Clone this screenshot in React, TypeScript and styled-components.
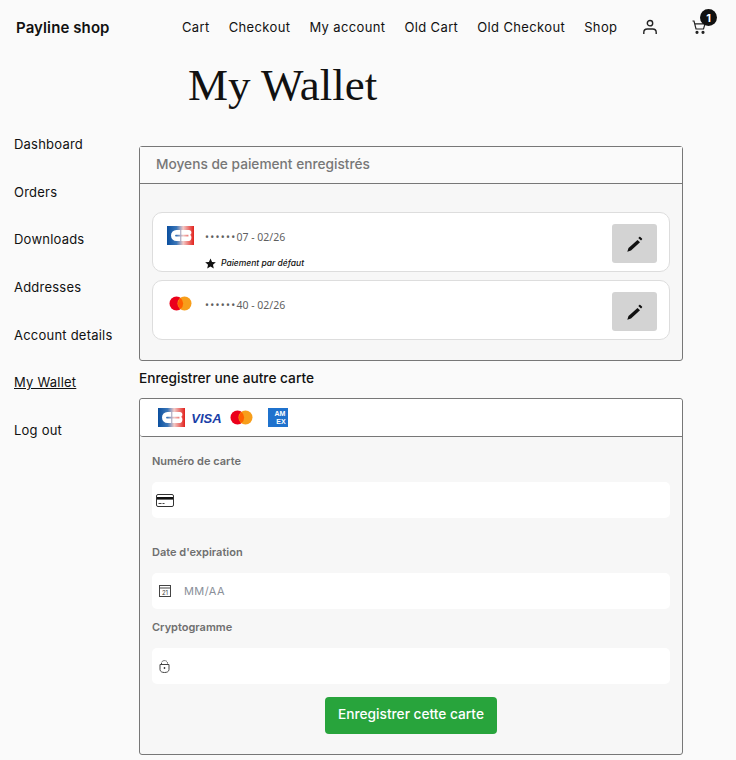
import React from "react";
import styled, { createGlobalStyle } from "styled-components";

const Global = createGlobalStyle`
  html, body { margin: 0; padding: 0; background: #fafafa; }
  body { font-family: Inter, "Noto Sans", sans-serif; color: #111; height: 760px; overflow: hidden; }
  * { box-sizing: border-box; }
`;

const Page = styled.div`width: 736px;`;

const Header = styled.header`
  display: flex;
  align-items: center;
  height: 54px;
  padding: 0 20px 0 16px;
`;
const Brand = styled.div`
  font-size: 15px;
  font-weight: 600;
  letter-spacing: 0.1px;
  width: 166px;
`;
const Nav = styled.nav`
  display: flex;
  align-items: center;
  gap: 19px;
  font-size: 13px;
  letter-spacing: 0.37px;
  white-space: nowrap;
  flex: 1;
`;
const IconSlot = styled.span<{ $ml?: number }>`
  position: relative;
  display: inline-flex;
  margin-left: ${p => p.$ml ?? 0}px;
`;
const Badge = styled.span`
  position: absolute;
  top: -10px;
  right: -10px;
  width: 17px;
  height: 17px;
  border-radius: 50%;
  background: #111;
  color: #fff;
  font-size: 11px;
  font-weight: 700;
  display: flex;
  align-items: center;
  justify-content: center;
`;
const Title = styled.h1`
  margin: 0;
  padding-left: 188px;
  height: 83px;
  font-family: "Liberation Serif", serif;
  font-weight: 400;
  font-size: 45px;
  line-height: 62px;
  color: #111;
`;
const Body = styled.div`
  display: flex;
  align-items: flex-start;
`;
const Side = styled.aside`
  width: 139px;
  padding: 0 0 0 14px;
  display: flex;
  flex-direction: column;
`;
const SideLink = styled.a<{ $active?: boolean }>`
  display: block;
  width: fit-content;
  height: 47.7px;
  font-size: 13px;
  letter-spacing: 0.22px;
  line-height: 14px;
  color: #111;
  text-decoration: ${p => (p.$active ? "underline" : "none")};
`;
const Main = styled.main`
  width: 544px;
  margin-top: 9px;
`;
const Panel = styled.section`
  border: 1px solid #777;
  border-radius: 3px;
  background: #f7f7f7;
`;
const PanelHead = styled.div`
  height: 37px;
  padding: 0 0 2px 16px;
  display: flex;
  align-items: center;
  border-bottom: 1px solid #777;
  font-size: 13.7px;
  font-weight: 500;
  color: #777;
  background: #fafafa;
`;
const CardList = styled.div`
  display: flex;
  flex-direction: column;
  gap: 8px;
  padding: 28px 12px 20px;
`;
const CardRow = styled.div`
  height: 60px;
  background: #fff;
  border: 1px solid #ddd;
  border-radius: 10px;
  display: flex;
  padding: 0 12px 0 14px;
`;
const Logo = styled.div`
  width: 27px;
  margin-top: 13px;
  display: flex;
  justify-content: center;
  height: 19px;
  align-items: center;
`;
const CardInfo = styled.div`
  flex: 1;
  padding: 17px 0 0 11px;
  font-size: 10.5px;
  line-height: 14px;
  color: #5f5f5f;
  font-family: "Noto Sans", Inter, sans-serif;
`;
const Dots = styled.span`
  letter-spacing: 1.3px;
`;
const Default = styled.div`
  display: flex;
  align-items: center;
  gap: 5px;
  margin-top: 13px;
  font-family: Inter, sans-serif;
  font-size: 8.5px;
  font-style: italic;
  font-weight: 500;
  color: #111;
  line-height: 12px;
`;
const EditButton = styled.button`
  align-self: flex-start;
  margin-top: 11px;
  width: 45px;
  height: 39px;
  border: none;
  border-radius: 3px;
  background: #d3d3d3;
  display: flex;
  align-items: center;
  justify-content: center;
  padding: 0;
`;
const SubTitle = styled.h2`
  margin: 9px 0 12px;
  font-size: 13.7px;
  line-height: 16px;
  font-weight: 500;
  color: #111;
`;
const LogoBand = styled.div`
  height: 38px;
  background: #fff;
  border-bottom: 1px solid #777;
  border-radius: 3px 3px 0 3px;
  display: flex;
  align-items: center;
  padding-left: 18px;
`;
const Form = styled.div`
  padding: 17px 12px 20px;
  display: flex;
  flex-direction: column;
`;
const Label = styled.label<{ $mb: number }>`
  font-size: 11px;
  line-height: 14px;
  font-weight: 600;
  color: #6f6f6f;
  display: block;
  margin-bottom: ${p => p.$mb}px;
`;
const Field = styled.div<{ $mb: number }>`
  height: 36px;
  background: #fff;
  border-radius: 5px;
  display: flex;
  align-items: center;
  padding-left: 4px;
  margin-bottom: ${p => p.$mb}px;
`;
const Placeholder = styled.span`
  margin-left: 12px;
  font-size: 11px;
  letter-spacing: 0.4px;
  color: #8a8f99;
`;
const Submit = styled.button`
  align-self: center;
  width: 172px;
  height: 37px;
  border: none;
  border-radius: 4px;
  background: #28a43c;
  color: #fff;
  font-family: Inter, sans-serif;
  font-size: 13.7px;
  font-weight: 500;
  padding: 0 0 3px;
`;
const LogoGap = styled.span<{ $ml: number }>`
  display: inline-flex;
  margin-left: ${p => p.$ml}px;
`;

const CB = () => (
  <svg width={27} height={19} viewBox="0 0 27 19">
    <defs>
      <linearGradient id="cbg" x1="0" x2="1" y1="0" y2="0">
        <stop offset="0" stopColor="#0b4f9f" />
        <stop offset="0.35" stopColor="#3a76b8" />
        <stop offset="0.6" stopColor="#f3c9c6" />
        <stop offset="1" stopColor="#e2211c" />
      </linearGradient>
    </defs>
    <rect width="27" height="19" fill="url(#cbg)" />
    <path d="M13.200 4H9.500a5.500 5.500 0 0 0 0 11h3.700v-4.500H8.900c-.5 0-.8-.3-.8-.8s.3-.9.8-.9h4.300z" fill="#fff" />
    <path d="M14.400 4h7.500c1.500 0 2.500.9 2.500 2.500 0 1-.6 2.100-1.400 2.500.9.300 1.400 1.300 1.400 2.500 0 1.700-1 3.500-2.500 3.500h-7.500v-4.500h7v-1.700h-7z" fill="#fff" />
  </svg>
);
const MC = () => (
  <svg width={23} height={15} viewBox="0 0 23 15">
    <circle cx="7.500" cy="7.500" r="7" fill="#eb001b" />
    <circle cx="15.500" cy="7.500" r="7" fill="#f79e1b" />
    <path d="M11.500 2a7 7 0 0 1 0 11 7 7 0 0 1 0-11z" fill="#ff5f00" />
  </svg>
);
const Pencil = () => (
  <svg width="18" height="18" viewBox="0 0 18 18">
    <path d="M14 1.800l2 1.800c.3.300.3.700 0 1l-1 1-2.700-2.500 1-1.200c.2-.2.500-.3.700-.1z M11.500 4.900l2.500 2.400L5 15.500 1.300 16.700l1.200-3.600z" fill="#111" />
  </svg>
);
const User = () => (
  <svg width="16" height="16" viewBox="0 0 16 16" fill="none" stroke="#222" strokeWidth="1.400">
    <circle cx="8" cy="4.200" r="2.700" />
    <path d="M1.800 15v-1.600c0-2.200 1.600-3.400 3.500-3.400h5.400c1.900 0 3.500 1.200 3.500 3.400V15" />
  </svg>
);
const Cart = () => (
  <svg width="16" height="16" viewBox="0 0 16 16" fill="none" stroke="#222" strokeWidth="1.200">
    <path d="M1.500 2H3l2 8h7.500L14 4.800H4" />
    <circle cx="6" cy="13.300" r="1" fill="#222" />
    <circle cx="12" cy="13.300" r="1" fill="#222" />
  </svg>
);
const Star = () => (
  <svg width="11" height="11" viewBox="0 0 24 24"><path d="M12 1l3.400 7.600 8.200.8-6.200 5.500 1.800 8.100L12 18.800 4.800 23l1.800-8.100L.4 9.400l8.200-.8z" fill="#111" /></svg>
);
const CardIcon = () => (
  <svg width="18" height="13" viewBox="0 0 18 13">
    <rect x=".5" y=".5" width="17" height="12" rx="1.500" fill="#fff" stroke="#333" />
    <rect x="1" y="3" width="16" height="2.600" fill="#111" />
    <rect x="2.500" y="9" width="3" height="1" fill="#444" />
    <rect x="6.500" y="9" width="2" height="1" fill="#444" />
  </svg>
);
const Cal = () => (
  <svg width="14" height="14" viewBox="0 0 14 14" fill="none" stroke="#444">
    <rect x="1.500" y="1.500" width="11" height="11" />
    <path d="M1.500 4h11" />
    <text x="7" y="11" fontSize="6" textAnchor="middle" fill="#444" stroke="none" fontFamily="Inter">21</text>
  </svg>
);
const Lock = () => (
  <svg width="11" height="13" viewBox="0 0 11 13" fill="none" stroke="#444">
    <path d="M2.500 4.500V3a3 2.400 0 0 1 6 0v1.500" strokeDasharray="1.500 .7" />
    <path d="M1 4.500h9v5c0 2-2 3-4.500 3S1 11.500 1 9.500z" />
    <rect x="4.800" y="7" width="1.400" height="2" fill="#444" stroke="none" />
  </svg>
);
const Visa = () => (
  <svg width="30" height="14" viewBox="0 0 30 14">
    <text x="14.500" y="12" textAnchor="middle" fontFamily="Liberation Sans" fontSize="13" fontWeight="700" fontStyle="italic" fill="#1a3fa8">VISA</text>
  </svg>
);
const Amex = () => (
  <svg width="20" height="19" viewBox="0 0 20 19">
    <rect width="20" height="19" fill="#1f72cd" />
    <text x="12" y="8" textAnchor="middle" fontFamily="Liberation Sans" fontSize="7" fontWeight="700" fill="#fff">AM</text>
    <text x="13" y="16" textAnchor="middle" fontFamily="Liberation Sans" fontSize="7" fontWeight="700" fill="#fff">EX</text>
  </svg>
);

const links = ["Cart", "Checkout", "My account", "Old Cart", "Old Checkout", "Shop"];
const side = ["Dashboard", "Orders", "Downloads", "Addresses", "Account details", "My Wallet", "Log out"];

export default function App() {
  return (
    <Page>
      <Global />
      <Header>
        <Brand>Payline shop</Brand>
        <Nav>
          {links.map(l => <span key={l}>{l}</span>)}
          <IconSlot $ml={6}><User /></IconSlot>
          <IconSlot $ml={14}><Cart /><Badge>1</Badge></IconSlot>
        </Nav>
      </Header>
      <Title>My Wallet</Title>
      <Body>
        <Side>
          {side.map(s => <SideLink key={s} $active={s === "My Wallet"}>{s}</SideLink>)}
        </Side>
        <Main>
          <Panel>
            <PanelHead>Moyens de paiement enregistrés</PanelHead>
            <CardList>
              <CardRow>
                <Logo><CB /></Logo>
                <CardInfo>
                  <Dots>••••••</Dots>07 - 02/26
                  <Default><Star /><span>Paiement par défaut</span></Default>
                </CardInfo>
                <EditButton aria-label="edit"><Pencil /></EditButton>
              </CardRow>
              <CardRow>
                <Logo><MC /></Logo>
                <CardInfo><Dots>••••••</Dots>40 - 02/26</CardInfo>
                <EditButton aria-label="edit"><Pencil /></EditButton>
              </CardRow>
            </CardList>
          </Panel>
          <SubTitle>Enregistrer une autre carte</SubTitle>
          <Panel>
            <LogoBand>
              <CB />
              <LogoGap $ml={7}><Visa /></LogoGap>
              <LogoGap $ml={8}><MC /></LogoGap>
              <LogoGap $ml={15}><Amex /></LogoGap>
            </LogoBand>
            <Form>
              <Label $mb={14}>Numéro de carte</Label>
              <Field $mb={27}><CardIcon /></Field>
              <Label $mb={14}>Date d'expiration</Label>
              <Field $mb={11}><IconSlot $ml={2}><Cal /></IconSlot><Placeholder>MM/AA</Placeholder></Field>
              <Label $mb={14}>Cryptogramme</Label>
              <Field $mb={13}><IconSlot $ml={3}><Lock /></IconSlot></Field>
              <Submit>Enregistrer cette carte</Submit>
            </Form>
          </Panel>
        </Main>
      </Body>
    </Page>
  );
}
